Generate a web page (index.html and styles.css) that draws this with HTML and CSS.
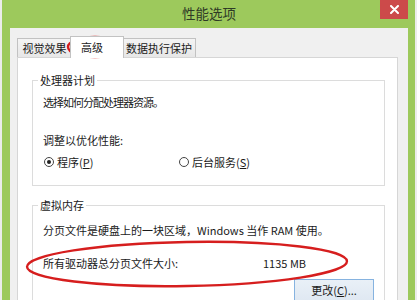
FILE: index.html
```html
<!DOCTYPE html>
<html lang="zh-CN">
<head>
<meta charset="utf-8">
<title>性能选项</title>
<link rel="stylesheet" href="styles.css">
</head>
<body>
<div class="window">
  <div class="titlebar">
    <span class="spacer"></span>
    <div class="title">性能选项</div>
    <div class="close">
      <svg width="9" height="9" viewBox="0 0 9 9"><path d="M1 1 L8 8 M8 1 L1 8" stroke="#fff" stroke-width="2" stroke-linecap="round"/></svg>
    </div>
  </div>
  <div class="content">
    <div class="tabs">
      <div class="tab t1">视觉效果</div>
      <div class="tab active">高级</div>
      <div class="tab t3">数据执行保护</div>
    </div>
    <div class="panel">
      <fieldset class="group g1">
        <legend>处理器计划</legend>
        <p class="line l1">选择如何分配处理器资源。</p>
        <p class="line l2">调整以优化性能:</p>
        <div class="radios">
          <div class="radio"><span class="dot on"></span>程序(<u>P</u>)</div>
          <div class="radio"><span class="dot"></span>后台服务(<u>S</u>)</div>
        </div>
      </fieldset>
      <fieldset class="group g2">
        <legend>虚拟内存</legend>
        <p class="line l3">分页文件是硬盘上的一块区域，Windows 当作 RAM 使用。</p>
        <div class="size-row"><span>所有驱动器总分页文件大小:</span><span>1135 MB</span></div>
        <div class="btn-row"><div class="btn">更改(<u>C</u>)...</div></div>
      </fieldset>
    </div>
  </div>
  <svg class="marks" width="417" height="300" viewBox="0 0 417 300">
    <ellipse cx="95" cy="47" rx="27" ry="10" fill="none" stroke="#d61e1e" stroke-width="2.4"/>
    <ellipse cx="187" cy="264" rx="160" ry="22" fill="none" stroke="#d61e1e" stroke-width="2.4" transform="rotate(-1 187 264)"/>
  </svg>
</div>
</body>
</html>
```
FILE: styles.css
```css
html, body {
  margin: 0;
  padding: 0;
}
body {
  width: 417px;
  height: 300px;
  overflow: hidden;
  background: #ececec;
  font-family: "Noto Sans CJK SC", "Noto Sans", sans-serif;
  font-size: 11px;
  color: #1a1a1a;
}
.window {
  position: relative;
  margin-left: 2px;
  width: 413px;
  height: 300px;
  overflow: hidden;
  box-sizing: border-box;
  padding: 0 7px 0 8px;
  background: #9dc95c;
  display: flex;
  flex-direction: column;
}
.titlebar {
  height: 28px;
  display: grid;
  grid-template-columns: 1fr auto 1fr;
  align-items: center;
  flex: none;
}
.title {
  font-size: 13.5px;
  color: #2e3a26;
  line-height: 16px;
  margin-top: -2px;
}
.close {
  justify-self: end;
  align-self: start;
  width: 28px;
  height: 19px;
  background: #cc4a4a;
  display: flex;
  align-items: center;
  justify-content: center;
}
.content {
  flex: 1;
  min-height: 0;
  background: #f0f0f0;
  padding: 8px 10px 0 7px;
  display: flex;
  flex-direction: column;
}
.tabs {
  display: flex;
  align-items: flex-end;
  height: 22px;
  margin-bottom: -1px;
  flex: none;
}
.tab {
  box-sizing: border-box;
  height: 20px;
  line-height: 18px;
  border: 1px solid #c2c2c2;
  border-bottom: 0;
  background: linear-gradient(#f4f4f4, #e6e6e6);
  text-align: center;
  white-space: nowrap;
}
.t1 { width: 55px; }
.t3 { width: 74px; }
.tab.active {
  position: relative;
  z-index: 1;
  width: 54px;
  height: 22px;
  line-height: 20px;
  margin: 0 -2px;
  background: #fff;
  text-align: left;
  padding-left: 10px;
}
.panel {
  flex: 1;
  min-height: 0;
  background: #fff;
  border: 1px solid #d6d6d6;
  border-bottom: 0;
}
.group {
  margin: 15px 12px 0 14px;
  border: 1px solid #dcdcdc;
  padding: 8px 0 16px 5px;
  min-width: 0;
}
.group legend {
  padding: 0 2px;
  line-height: 14px;
}
.g2 {
  margin-top: 12px;
  padding-top: 11px;
  padding-bottom: 30px;
}
.line {
  margin: 0 0 0 5px;
  line-height: 14px;
  white-space: nowrap;
}
.l1 { letter-spacing: -1px; }
.l2 { margin-top: 24px; }
.radios {
  margin: 8px 0 0 5px;
  display: grid;
  grid-template-columns: 135px auto;
  line-height: 14px;
}
.radio {
  display: flex;
  align-items: center;
}
.dot {
  box-sizing: border-box;
  width: 10px;
  height: 10px;
  border: 1px solid #444;
  border-radius: 50%;
  margin: 0 3px 0 1px;
  background: #fff;
  display: flex;
  align-items: center;
  justify-content: center;
}
.dot.on::after {
  content: "";
  width: 4px;
  height: 4px;
  border-radius: 50%;
  background: #222;
}
.size-row {
  margin: 19px 0 0 5px;
  display: grid;
  grid-template-columns: 220px auto;
  line-height: 14px;
}
.btn-row {
  margin-top: 9px;
  display: flex;
  justify-content: flex-end;
  padding-right: 10px;
}
.btn {
  box-sizing: border-box;
  width: 80px;
  height: 23px;
  line-height: 21px;
  text-align: center;
  border: 1px solid #86b3e0;
  background: linear-gradient(#e9f0f7, #dfe8f2);
}
.marks {
  position: absolute;
  left: -2px;
  top: 0;
  pointer-events: none;
}
```
